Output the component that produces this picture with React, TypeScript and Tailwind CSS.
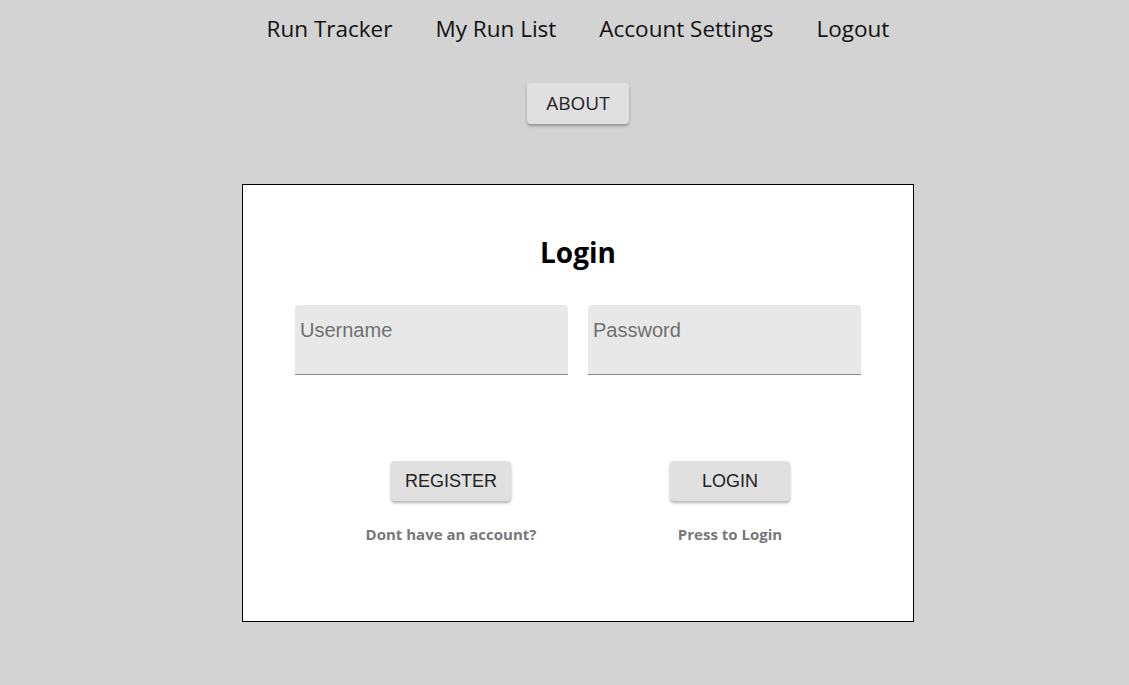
import React, { useState } from "react";

const navLinks = ["Run Tracker", "My Run List", "Account Settings", "Logout"];

const segoe = "font-['Open_Sans',sans-serif]";
const arial = "font-['Liberation_Sans',Arial,sans-serif]";

const App = () => {
  const [username, setUsername] = useState("");
  const [password, setPassword] = useState("");

  return (
    <div className="min-h-screen w-full bg-[#d3d3d3] pl-[27px]">
      <div className="flex flex-col items-center">
        {/* top nav */}
        <nav className={`flex gap-[43px] pt-[11px] text-[22.5px] leading-[35px] text-[#111] ${segoe}`}>
          {navLinks.map((link) => (
            <a key={link} href="#">
              {link}
            </a>
          ))}
        </nav>

        <button
          className={`mt-[37px] h-[41px] w-[102px] rounded-[4px] bg-[#e0e0e0] text-[19px] text-[#222] shadow-[0_2px_3px_rgba(0,0,0,0.3)] ${segoe}`}
        >
          ABOUT
        </button>

        {/* login card */}
        <div className="mt-[60px] h-[438px] w-[672px] border border-black bg-white">
          <h1 className={`mt-[47px] text-center text-[28px] font-bold leading-[40px] text-black ${segoe}`}>
            Login
          </h1>

          <div className="mt-[33px] flex justify-center gap-[20px]">
            <input
              value={username}
              onChange={(e) => setUsername(e.target.value)}
              placeholder="Username"
              className={`h-[70px] w-[273px] rounded-t-[4px] border-b border-[#8a8a8a] bg-[#e8e8e8] px-[5px] pb-[18px] text-[20px] text-[#333] placeholder:text-[#707070] outline-none ${arial}`}
            />
            <input
              type="password"
              value={password}
              onChange={(e) => setPassword(e.target.value)}
              placeholder="Password"
              className={`h-[70px] w-[273px] rounded-t-[4px] border-b border-[#8a8a8a] bg-[#e8e8e8] px-[5px] pb-[18px] text-[20px] text-[#333] placeholder:text-[#707070] outline-none ${arial}`}
            />
          </div>

          <div className="mt-[86px] flex pl-[108px] gap-[79px]">
            <div className="flex w-[200px] flex-col items-center">
              <button
                className={`h-[40px] w-[120px] rounded-[4px] bg-[#e0e0e0] text-[18px] text-[#222] shadow-[0_2px_3px_rgba(0,0,0,0.3)] ${arial}`}
              >
                REGISTER
              </button>
              <p className={`mt-[22px] text-[15px] font-bold text-[#777] ${segoe}`}>
                Dont have an account?
              </p>
            </div>
            <div className="flex w-[200px] flex-col items-center">
              <button
                className={`h-[40px] w-[120px] rounded-[4px] bg-[#e0e0e0] text-[18px] text-[#222] shadow-[0_2px_3px_rgba(0,0,0,0.3)] ${arial}`}
              >
                LOGIN
              </button>
              <p className={`mt-[22px] text-[15px] font-bold text-[#777] ${segoe}`}>
                Press to Login
              </p>
            </div>
          </div>
        </div>
      </div>
    </div>
  );
};

export default App;
